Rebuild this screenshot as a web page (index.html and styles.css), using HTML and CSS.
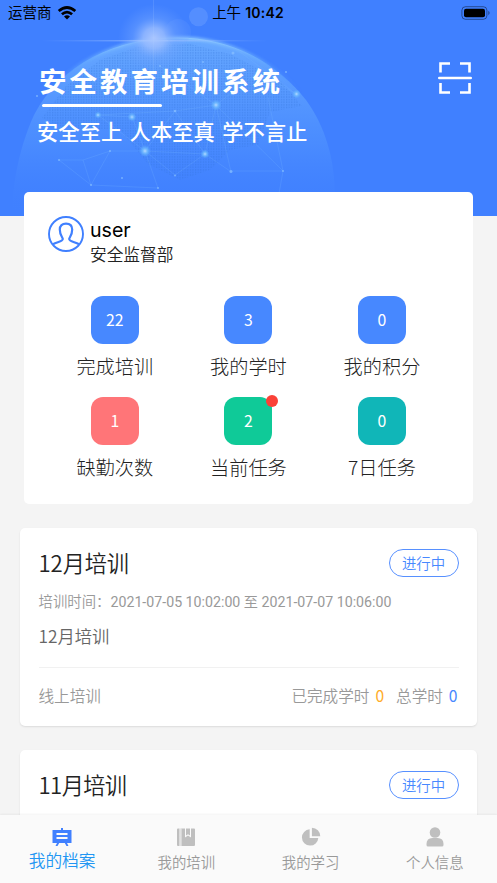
FILE: index.html
```html
<!DOCTYPE html>
<html lang="zh-CN">
<head>
<meta charset="utf-8">
<meta name="viewport" content="width=device-width, initial-scale=1">
<title>安全教育培训系统</title>
<link rel="stylesheet" href="styles.css">
</head>
<body>
<div class="app">
  <main class="content">
    <header class="hero">
      <svg class="globe" viewBox="0 0 497 216" aria-hidden="true">
        <defs>
          <radialGradient id="flare"><stop offset="0" stop-color="#a9c5ff"/><stop offset=".3" stop-color="#97bbff" stop-opacity=".85"/><stop offset=".6" stop-color="#75a7ff" stop-opacity=".4"/><stop offset="1" stop-color="#6a9eff" stop-opacity="0"/></radialGradient>
          <radialGradient id="node"><stop offset="0" stop-color="#b5d8ff"/><stop offset=".4" stop-color="#72bbff" stop-opacity=".9"/><stop offset="1" stop-color="#5dafff" stop-opacity="0"/></radialGradient>
          <linearGradient id="sphere" x1="0" y1="0" x2="0" y2="1"><stop offset="0" stop-color="#68a9ff"/><stop offset=".3" stop-color="#5a9cff" stop-opacity=".9"/><stop offset=".6" stop-color="#5093ff" stop-opacity=".6"/><stop offset="1" stop-color="#4080ff" stop-opacity="0"/></linearGradient>
          <linearGradient id="rim" x1="0" y1="0" x2="0" y2="1"><stop offset="0" stop-color="#8ac6ff"/><stop offset=".35" stop-color="#61a9ff" stop-opacity=".5"/><stop offset=".7" stop-color="#4080ff" stop-opacity="0"/></linearGradient>
          <linearGradient id="streak"><stop offset="0" stop-color="#8bb4ff" stop-opacity="0"/><stop offset=".5" stop-color="#a6c6ff"/><stop offset="1" stop-color="#8bb4ff" stop-opacity="0"/></linearGradient>
          <pattern id="dots" width="2.6" height="2.6" patternUnits="userSpaceOnUse"><rect width="1.2" height="1.7" fill="#2f70d8" fill-opacity=".32"/></pattern>
          <filter id="soft"><feGaussianBlur stdDeviation="1.6"/></filter>
        </defs>
        <path d="M12 216C12 188 18 150 34 115C60 64 118 38 177 38C232 38 278 64 306 100C328 130 338 170 334 216Z" fill="url(#sphere)"/>
        <path d="M66 86L100 60L140 46L190 44L230 54L280 80L302 106L270 112L258 145L230 150L210 170L180 180L148 164L120 130L64 128L42 118Z" fill="url(#dots)"/>
        <g fill="none" stroke="url(#rim)">
          <path d="M34 115C60 64 118 38 177 38C232 38 278 64 306 100" stroke-width="3" filter="url(#soft)"/>
          <path d="M34 115C60 64 118 38 177 38C232 38 278 64 306 100" stroke-width="1"/>
        </g>
        <g fill="none" stroke="#79b9ff" stroke-opacity=".26" stroke-width=".8">
          <path d="M59 160L83 160L110 151L145 151L132 117L98 115L175 111L216 105L258 72L296 94L240 52"/>
          <path d="M83 160L91 185L110 151M91 185L158 188L145 151L205 154L216 105L283 171L230 171L205 154L175 111L145 151L175 175L205 154M98 115L145 151M216 105L160 66M216 105L231 172M268 97L283 171L277 205M59 160L91 185"/>
        </g>
        <ellipse cx="154" cy="38" rx="36" ry="34" fill="url(#flare)"/>
        <rect x="42" y="40.3" width="226" height="1" fill="url(#streak)"/>
        <rect x="153" y="0" width=".8" height="90" fill="#b6d0ff" fill-opacity=".2"/>
        <circle cx="198.500" cy="16.800" r="9.500" fill="#7ba8ff" fill-opacity=".35"/>
        <circle cx="178" cy="32" r="13" fill="#7ba8ff" fill-opacity=".15"/>
        <g fill="url(#node)">
          <circle cx="145" cy="151" r="6"/><circle cx="216" cy="105" r="5.500"/><circle cx="205" cy="154" r="4.500"/><circle cx="296.500" cy="94" r="4.500"/><circle cx="132" cy="117" r="4.500"/><circle cx="98" cy="115" r="3.500"/>
        </g>
        <g fill="#87bfff" fill-opacity=".75">
          <circle cx="175" cy="111" r="1.300"/><circle cx="231" cy="171.500" r="1.500"/><circle cx="175" cy="175.500" r="1"/><circle cx="37" cy="96" r="1"/><circle cx="59" cy="160" r="1"/><circle cx="91" cy="185" r="1"/><circle cx="158" cy="188" r="1"/><circle cx="110" cy="151" r="1"/><circle cx="283" cy="171" r="1"/><circle cx="233" cy="53" r="1.500"/><circle cx="160" cy="66" r="1"/><circle cx="286" cy="72" r="1"/><circle cx="203" cy="62" r="1"/><circle cx="122" cy="178" r="1"/>
        </g>
      </svg>
      <div class="status">
        <div class="carrier">运营商
          <svg width="20" height="14" viewBox="0 0 20 14"><g fill="none" stroke="#000" stroke-width="2.700"><path d="M1.700 5.100Q10-2.100 18.300 5.100"/><path d="M4.900 8.300Q10 3.900 15.100 8.300"/></g><path d="M7 10.400Q10 8 13 10.400L10 13.400Z"/></svg>
        </div>
        <div class="clock">上午 <b>10:42</b></div>
        <svg class="battery" width="30" height="14" viewBox="0 0 30 14"><rect x=".9" y=".7" width="25" height="12.600" rx="3.600" fill="none" stroke="#000" stroke-opacity=".42"/><rect x="3" y="2.700" width="21" height="8.600" rx="2"/><path d="M27.300 4.800Q30 7 27.300 9.300Z" fill-opacity=".45"/></svg>
      </div>
      <div class="brand">
        <div>
          <h1>安全教育培训系统</h1>
          <div class="underline"></div>
          <p class="slogan">安全至上 人本至真 学不言止</p>
        </div>
        <svg class="scan" width="34" height="32" viewBox="0 0 34 32"><path d="M2.500 10.500V1.500H12M22 1.500H31.500V10.500M2.500 21V30.500H12M22 30.500H31.500V21" fill="none" stroke="#fff" stroke-width="2.600"/><path d="M1.300 16H32.700" stroke="#fff" stroke-width="2.600" stroke-linecap="round"/></svg>
      </div>
    </header>

    <section class="profile">
      <div class="person">
        <svg width="36" height="36" viewBox="0 0 36 36" fill="none" stroke="#4080ff"><circle cx="18" cy="18" r="17" stroke-width="1.900"/><path d="M5 28.200C9 26 14.800 25.500 14.800 23.100C14.800 21.300 11.800 19.500 11.800 13.600C11.800 9.600 14.200 7.600 18 7.600S24.200 9.600 24.200 13.600C24.200 19.500 21.200 21.300 21.200 23.100C21.200 25.500 27 26 31 28.200" stroke-width="2.200"/></svg>
        <div><div class="name">user</div><div class="dept">安全监督部</div></div>
      </div>
      <div class="stats">
        <div class="stat"><span class="tile">22</span><span>完成培训</span></div>
        <div class="stat"><span class="tile">3</span><span>我的学时</span></div>
        <div class="stat"><span class="tile">0</span><span>我的积分</span></div>
        <div class="stat"><span class="tile red">1</span><span>缺勤次数</span></div>
        <div class="stat"><span class="tile green">2<i class="dot"></i></span><span>当前任务</span></div>
        <div class="stat"><span class="tile teal">0</span><span>7日任务</span></div>
      </div>
    </section>

    <article class="course">
      <div class="course-head"><h2>12月培训</h2><span class="tag">进行中</span></div>
      <div class="period">培训时间：<span class="dates">2021-07-05 10:02:00 至 2021-07-07 10:06:00</span></div>
      <div class="desc">12月培训</div>
      <div class="course-foot"><span>线上培训</span><span class="hours">已完成学时<b class="done">0</b>总学时<b class="total">0</b></span></div>
    </article>
    <article class="course">
      <div class="course-head"><h2 class="tight">11月培训</h2><span class="tag">进行中</span></div>
    </article>
  </main>

  <nav class="tabs">
    <a class="tab active"><svg width="20" height="20" viewBox="0 0 20 20"><path fill="#4080ff" fill-rule="evenodd" d="M9 1H11V3H19.500V16H15L16.500 19H14.500L12.800 16H7.200L5.500 19H3.500L5 16H.5V3H9ZM4.500 6V8H15.500V6ZM4.500 10V12H15.500V10Z"/></svg><span>我的档案</span></a>
    <a class="tab"><svg width="20" height="20" viewBox="0 0 20 20"><path fill="#bfbfbf" fill-rule="evenodd" d="M2 1.500H3.500V19H2Q1 19 1 18V2.500Q1 1.500 2 1.500ZM4.500 1.500H18Q19 1.500 19 2.500V18Q19 19 18 19H4.500ZM9 1.500V10.500L12 8.500L15 10.500V1.500H14V8.500L12 7.200L10 8.500V1.500Z"/><path d="M5.200 1.500V19" stroke="#fafafa" stroke-width=".6"/></svg><span>我的培训</span></a>
    <a class="tab"><svg width="22" height="22" viewBox="0 0 22 22"><path fill="#bfbfbf" d="M9.500 2.500V12H19A9 9 0 1 1 9.500 2.500ZM12 .8A9.300 9.300 0 0 1 21.200 10.200H12Z"/></svg><span>我的学习</span></a>
    <a class="tab"><svg width="20" height="20" viewBox="0 0 20 20"><g fill="#bfbfbf"><circle cx="10" cy="5.500" r="5.300"/><path d="M1.500 17Q1.500 11 7.500 11H12.500Q18.500 11 18.500 17V18Q18.500 19.500 17 19.500H3Q1.500 19.500 1.500 18Z"/></g></svg><span>个人信息</span></a>
  </nav>
</div>
</body>
</html>
```
FILE: styles.css
```css
* { box-sizing: border-box; }
body {
  margin: 0;
  background: #f4f4f4;
  color: #222;
  font-family: "Noto Sans CJK SC", sans-serif;
  font-weight: 350;
}
h1, h2, p { margin: 0; }
svg { display: block; flex: none; }
.app { display: flex; flex-direction: column; height: 883px; overflow: hidden; }
.content { flex: 1; min-height: 0; overflow: hidden; }

.hero { position: relative; height: 216px; background: #4080ff; }
.globe { position: absolute; inset: 0; width: 497px; height: 216px; }
.status {
  position: relative;
  display: grid;
  grid-template-columns: 1fr auto 1fr;
  align-items: center;
  height: 26px;
  padding: 0 6px 0 8px;
  color: #000;
  font-family: Inter, "Noto Sans CJK SC", sans-serif;
  font-size: 14.500px;
  font-weight: 400;
}
.carrier { display: flex; align-items: center; gap: 5px; line-height: 26px; }
.clock { margin-left: -3px; line-height: 26px; white-space: nowrap; }
.clock b { font-weight: 600; font-size: 14px; letter-spacing: .2px; }
.battery { justify-self: end; }
.brand {
  position: relative;
  display: flex;
  justify-content: space-between;
  align-items: flex-start;
  padding: 36px 25px 0 37px;
  color: #fff;
}
h1 {
  padding-left: 2px;
  font-size: 27.500px;
  line-height: 37px;
  font-weight: 700;
  letter-spacing: 3px;
}
.underline { width: 120px; height: 3px; margin: 5px 0 0 5px; border-radius: 2px; background: #fff; }
.slogan { margin-top: 8px; font-size: 21.300px; line-height: 32px; font-weight: 500; word-spacing: 2.600px; white-space: nowrap; }

.profile {
  position: relative;
  height: 312px;
  margin: -24px 24px 0;
  padding: 24px;
  border-radius: 5px;
  background: #fff;
}
.person { display: flex; gap: 6px; height: 80px; }
.name { height: 27px; color: #000; font-family: Inter, sans-serif; font-size: 19.600px; line-height: 28px; font-weight: 400; }
.dept { font-size: 16.700px; line-height: 22px; }
.stats { display: grid; grid-template-columns: repeat(3, 133.600px); grid-auto-rows: 101px; }
.stat { display: flex; flex-direction: column; align-items: center; gap: 7px; font-size: 19.200px; line-height: 30px; font-weight: 300; }
.tile {
  position: relative;
  width: 48px;
  height: 48px;
  border-radius: 12px;
  background: #4788ff;
  color: #fff;
  font-size: 15.800px;
  line-height: 47px;
  font-weight: 400;
  text-align: center;
}
.red { background: #ff7578; }
.green { background: #0fca98; }
.teal { background: #10b6b8; }
.dot { position: absolute; top: -2px; right: -6px; width: 12px; height: 12px; border-radius: 50%; background: #fa4137; }

.course {
  height: 197.500px;
  margin: 24px 20px 0 19.500px;
  padding: 21px 18.500px 0 19px;
  border-radius: 5px;
  background: #fff;
  box-shadow: 0 1px 2px rgba(0, 0, 0, .1);
}
.course-head { display: flex; justify-content: space-between; align-items: flex-start; height: 28px; }
h2 { font-size: 22.200px; line-height: 26px; font-weight: 350; letter-spacing: -.1px; }
.tight { letter-spacing: -.6px; }
.tag {
  width: 70px;
  height: 28px;
  border: 1.500px solid #5790ff;
  border-radius: 14px;
  color: #4788ff;
  font-size: 14.400px;
  line-height: 25px;
  text-align: center;
}
.period { margin-top: 13px; color: #999; font-size: 14.400px; line-height: 22px; white-space: nowrap; }
.dates { font-family: Roboto, "Noto Sans CJK SC", sans-serif; font-size: 14.200px; font-weight: 400; }
.desc { margin-top: 10px; color: #666; font-size: 17.300px; line-height: 26px; }
.course-foot {
  display: flex;
  justify-content: space-between;
  margin-top: 18px;
  padding-top: 14px;
  border-top: 1px solid #f1f1f1;
  color: #999;
  font-size: 15.600px;
  line-height: 26px;
}
.hours b { font-weight: 400; }
.done { margin: 0 12px 0 6px; color: #ffac28; }
.total { margin: 0 1px 0 6px; color: #4788ff; }

.tabs { position: relative; display: flex; height: 68px; background: #fafafa; box-shadow: 0 -1px 2px rgba(0, 0, 0, .05); }
.tab { flex: 1; display: flex; flex-direction: column; align-items: center; padding-top: 12px; color: #999; font-size: 14.400px; line-height: 24px; }
.tab svg { height: 20px; }
.tab span { margin-top: 3px; }
.active { color: #2196f3; font-size: 16.700px; }
.active span { margin-top: 1px; }
```
